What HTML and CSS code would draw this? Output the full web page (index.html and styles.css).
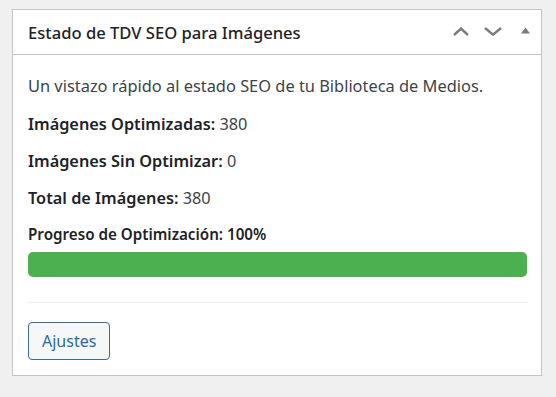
FILE: index.html
```html
<!doctype html>
<html>
  <head>
    <meta charset='utf-8'>
    <title>Estado de TDV SEO para Imágenes</title>
    <link rel="stylesheet" href="styles.css">
  </head>
  <body>

    <div class="postbox">
      <div class="postbox-header">
        <h2 class="hndle">Estado de TDV SEO para Imágenes</h2>
        <div class="handle-actions">
          <button class="handle-btn" aria-label="Mover arriba">
            <svg width="16" height="9" viewBox="0 0 16 9"><path d="M1 8 L8 1.6 L15 8" fill="none" stroke="#787c82" stroke-width="2.5"/></svg>
          </button>
          <button class="handle-btn" aria-label="Mover abajo">
            <svg width="18" height="9" viewBox="0 0 18 9"><path d="M1 1 L9 7.6 L17 1" fill="none" stroke="#787c82" stroke-width="2.5"/></svg>
          </button>
          <button class="handle-btn toggle" aria-label="Alternar panel">
            <svg width="9" height="7" viewBox="0 0 9 7"><path d="M0 6.5 L4.5 0.5 L9 6.5 Z" fill="#787c82"/></svg>
          </button>
        </div>
      </div>

      <div class="inside">
        <p class="intro">Un vistazo rápido al estado SEO de tu Biblioteca de Medios.</p>
        <p class="stat"><strong>Imágenes Optimizadas:</strong> 380</p>
        <p class="stat"><strong>Imágenes Sin Optimizar:</strong> 0</p>
        <p class="stat"><strong>Total de Imágenes:</strong> 380</p>

        <p class="progress-label"><strong>Progreso de Optimización: 100%</strong></p>
        <div class="progress">
          <div class="progress-bar" style="width:100%"></div>
        </div>

        <hr class="sep">

        <a class="button" href="#">Ajustes</a>
      </div>
    </div>

  </body>
</html>
```

FILE: styles.css
```css
body {
  margin: 0;
  padding: 9px 0 0 12px;
  background: #f0f0f1;
  font-family: 'Noto Sans', sans-serif;
  color: #1d2327;
}

.postbox {
  width: 528px;
  background: #fff;
  border: 1px solid #c3c4c7;
  box-shadow: 0 1px 1px rgba(0, 0, 0, .04);
}

.postbox-header {
  display: flex;
  align-items: center;
  justify-content: space-between;
  height: 44px;
  border-bottom: 1px solid #c3c4c7;
  padding-left: 15px;
}

.hndle {
  margin: 0;
  font-size: 16.6px;
  font-weight: 500;
  line-height: 24px;
  padding-top: 1px;
}

.handle-actions {
  display: flex;
  align-items: center;
  height: 100%;
}

.handle-btn {
  display: flex;
  align-items: center;
  justify-content: center;
  width: 32px;
  height: 100%;
  padding: 0 0 2px;
  border: 0;
  background: none;
}

.handle-btn.toggle {
  padding-top: 0;
  padding-bottom: 3px;
}

.inside {
  padding: 19px 14px 15px 15px;
}

p {
  margin: 0;
}

.intro {
  font-size: 16.4px;
  line-height: 24px;
  color: #3c434a;
  margin-bottom: 14px;
}

.stat {
  font-size: 16.3px;
  line-height: 24px;
  color: #3c434a;
  margin-bottom: 13px;
}

.stat strong {
  font-weight: 600;
  color: #1d2327;
}

.progress-label {
  font-size: 15.2px;
  line-height: 22px;
  margin: 0 0 7px;
}

.progress-label strong {
  font-weight: 600;
}

.progress {
  height: 25px;
  background: #f0f0f1;
  border-radius: 5px;
  overflow: hidden;
}

.progress-bar {
  height: 100%;
  background: #4caf50;
}

.sep {
  margin: 25px -1px 19px 0;
  border: 0;
  border-top: 1px solid #f0f0f1;
}

.button {
  display: inline-block;
  height: 36px;
  line-height: 36px;
  padding: 0 13px;
  font-size: 16px;
  color: #2c6a9c;
  text-decoration: none;
  background: #f6f7f7;
  border: 1px solid #3c6a90;
  border-radius: 4px;
}
```
